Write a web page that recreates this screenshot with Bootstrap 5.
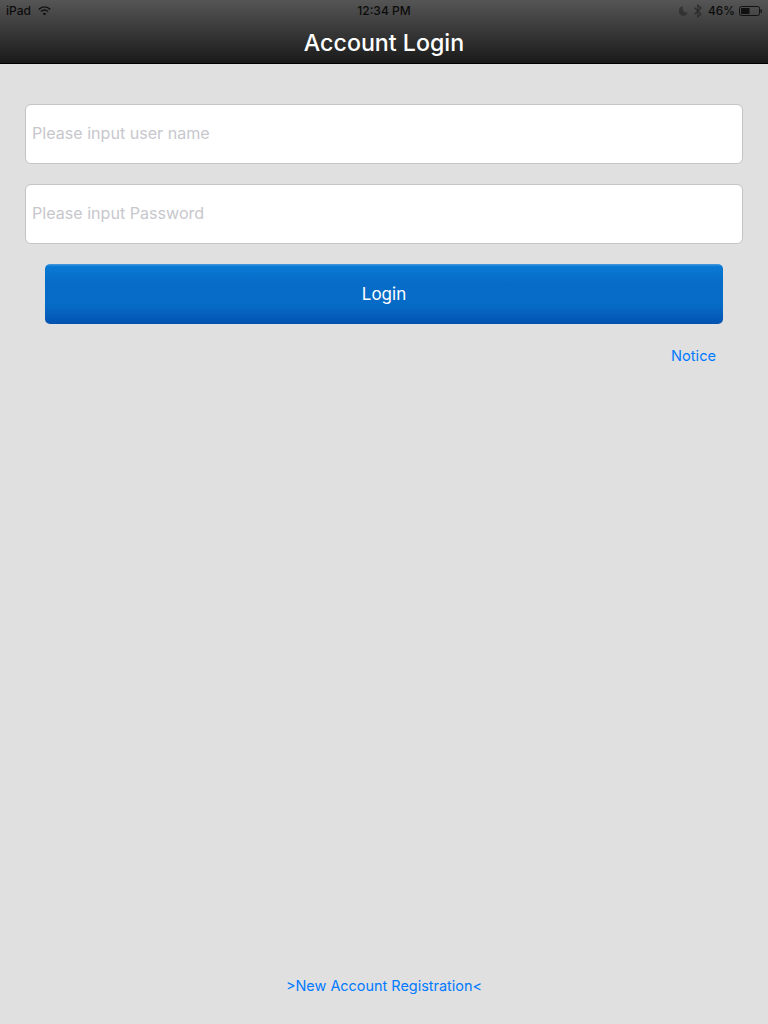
<!DOCTYPE html>
<html lang="en">
<head>
  <meta charset="UTF-8">
  <meta name="viewport" content="width=device-width, initial-scale=1.0">
  <title>Account Login</title>
  <link href="https://cdn.jsdelivr.net/npm/bootstrap@5.3.0/dist/css/bootstrap.min.css" rel="stylesheet">
  <style>
    html, body { height: 100%; }
    body { font-family: Inter, "Liberation Sans", sans-serif; background: #e0e0e0; overflow: hidden; }
    .app-screen { height: 1024px; }
    .top-bar { height: 64px; background: linear-gradient(#555555, #1a1a1a); border-bottom: 1px solid #000; }
    .status-row { height: 20px; padding: 2px 6px 0; font-size: 12px; font-weight: 500; line-height: 18px; color: #0c0c0c; }
    .status-side { width: 200px; }
    .status-pct { font-size: 11.8px; margin-right: 4px; }
    .status-glyph { margin-right: 6px; }
    .wifi-icon { margin-left: -1px; }
    .title-row { height: 43px; color: #fff; font-size: 23.2px; font-weight: 500; padding-top: 3px; }
    .login-area { padding: 40px 25px 0; }
    .login-form { gap: 20px; }
    .login-input.form-control { height: 60px; padding: 0 6px 2px; font-size: 16.1px; border: 1px solid #c4c4c4; border-radius: 6px; background: #fff; }
    .login-input.form-control::placeholder { color: #c7c7cd; opacity: 1; }
    .login-btn.btn { height: 60px; margin: 0 20px; padding-top: 8px; color: #fff; font-size: 17px; border: 0; border-radius: 5px;
      background: linear-gradient(#3d94dc 0, #3d94dc 1px, #0a7ad4 2px, #076cc8 18px, #066bc6 42px, #0352b0 100%); }
    .link-blue { color: #007aff; text-decoration: none; font-size: 14.45px; }
    .notice-row { padding: 21px 27px 0 0; line-height: 20px; }
    .notice-row .link-blue { font-size: 14.6px; }
    .register-row { padding-bottom: 28px; line-height: 20px; }
  </style>
</head>
<body>
  <div class="app-screen d-flex flex-column">
    <header class="top-bar flex-shrink-0">
      <div class="status-row d-flex align-items-center justify-content-between">
        <div class="status-side d-flex align-items-center gap-2">
          <span>iPad</span>
          <svg class="wifi-icon" width="13" height="10" viewBox="0 0 13 10" fill="none" stroke="#111" stroke-width="1.5">
            <path d="M.8 3.4C4.2.3 8.8.3 12.2 3.4"/>
            <path d="M2.9 5.5C5 3.7 8 3.7 10.1 5.5"/>
            <path d="M6.5 9.6 4.6 7.4C5.8 6.6 7.2 6.6 8.4 7.4Z" fill="#111" stroke="none"/>
          </svg>
        </div>
        <span>12:34 PM</span>
        <div class="status-side d-flex align-items-center justify-content-end">
          <svg class="status-glyph" width="9" height="10" viewBox="0 0 9 10" fill="#333">
            <path d="M4.2.4A4.7 4.7 0 1 0 8.8 6.8 4.4 4.4 0 0 1 4.2.4Z"/>
          </svg>
          <svg class="status-glyph" width="8" height="14" viewBox="0 0 8 14" fill="none" stroke="#2c2c2c" stroke-width="1.2">
            <path d="M.6 3.8 7 10 3.8 13V1L7 4 .6 10.2"/>
          </svg>
          <span class="status-pct">46%</span>
          <svg width="23" height="10" viewBox="0 0 23 10">
            <rect x=".5" y=".5" width="20" height="9" rx="2" fill="none" stroke="#111"/>
            <rect x="2" y="2" width="8.5" height="6" fill="#111"/>
            <rect x="21.5" y="3.2" width="1.3" height="3.6" fill="#111"/>
          </svg>
        </div>
      </div>
      <div class="title-row d-flex align-items-center justify-content-center">Account Login</div>
    </header>

    <main class="login-area flex-grow-1 d-flex flex-column">
      <form class="login-form d-flex flex-column">
        <input class="login-input form-control" type="text" placeholder="Please input user name">
        <input class="login-input form-control" type="password" placeholder="Please input Password">
        <button class="login-btn btn" type="button">Login</button>
      </form>
      <div class="notice-row text-end"><a class="link-blue" href="#">Notice</a></div>
      <div class="register-row mt-auto text-center"><a class="link-blue" href="#">&gt;New Account Registration&lt;</a></div>
    </main>
  </div>
  <script src="https://cdn.jsdelivr.net/npm/bootstrap@5.3.0/dist/js/bootstrap.bundle.min.js"></script>
</body>
</html>
